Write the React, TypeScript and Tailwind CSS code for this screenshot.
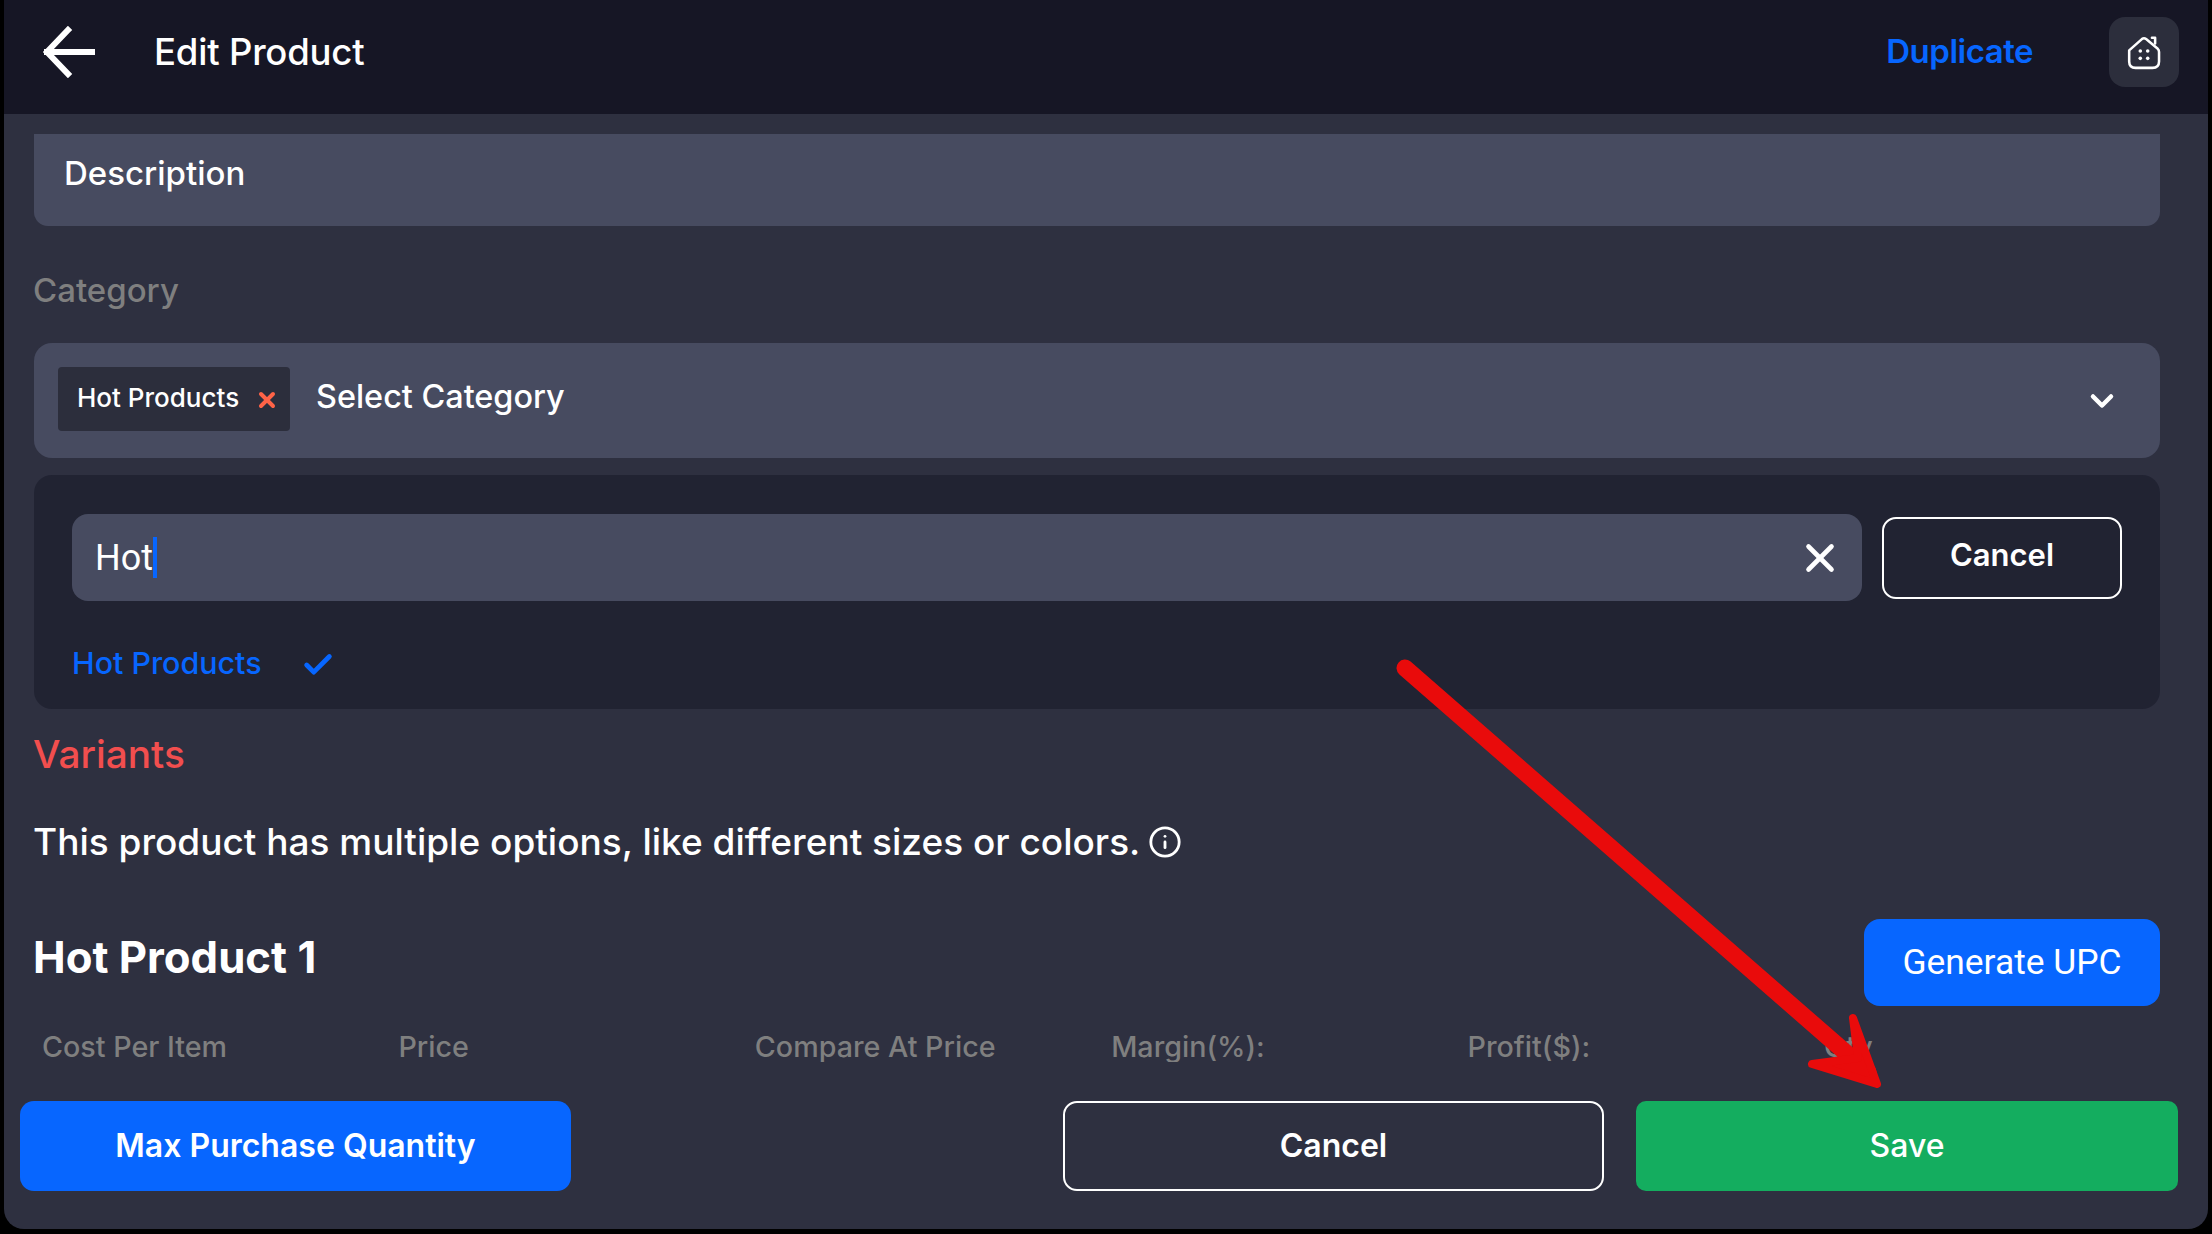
import React from 'react';
import { ChevronDown, X, Check, Info } from 'lucide-react';

const columns = ['Cost Per Item', 'Price', 'Compare At Price', 'Margin(%):', 'Profit($):', 'Qty'];

function HomeIcon() {
    return (
        <svg width="36" height="36" viewBox="0 0 34 34" fill="none" stroke="white" strokeWidth="2.4" strokeLinecap="round" strokeLinejoin="round">
            <path d="M3 15.5 L15 4.8 Q17 3.2 19 4.8 L30 14 Q31.2 15.2 31.2 17 V26 Q31.2 32 25 32 H9 Q3 32 3 26 Z" />
            <path d="M24.5 3.5 L27.5 3.5 L27.5 9" />
            <circle cx="13.5" cy="16" r="1.7" fill="white" stroke="none" />
            <circle cx="20.5" cy="16" r="1.7" fill="white" stroke="none" />
            <circle cx="13.5" cy="23" r="1.7" fill="white" stroke="none" />
            <circle cx="20.5" cy="23" r="1.7" fill="white" stroke="none" />
        </svg>
    );
}

export default function App() {
    return (
        <div className="relative h-[1234px] w-[2212px] overflow-hidden bg-black font-['Inter',sans-serif] text-white">
            <div className="ml-[4px] flex h-[1229px] w-[2204px] flex-col rounded-b-[20px] bg-[#2e3040]">
                {/* Top bar */}
                <div className="flex h-[114px] shrink-0 items-center bg-[#161625] pb-[10px] pl-[38px] pr-[29px]">
                    <svg width="54" height="52" viewBox="0 0 54 52" fill="none" stroke="white" strokeWidth="6" strokeLinecap="square">
                        <path d="M5 26 H50" />
                        <path d="M26 4 L5 26 L26 48" />
                    </svg>
                    <span className="ml-[58px] text-[36.5px] font-medium tracking-[-0.2px]">Edit Product</span>
                    <span className="ml-auto text-[33px] font-semibold tracking-[-0.5px] text-[#0766ff]">Duplicate</span>
                    <button className="ml-[76px] flex h-[70px] w-[70px] items-center justify-center rounded-[16px] bg-[#2c2e3c]">
                        <HomeIcon />
                    </button>
                </div>

                {/* Scrolled form, cut off at both ends */}
                <div className="mt-[20px] h-[928px] shrink-0 overflow-hidden pl-[30px] pr-[48px]">
                    <div className="h-[92px] rounded-b-[14px] bg-[#474b60] pl-[30px] pt-[19px] text-[33px] font-medium leading-[40px]">
                        Description
                    </div>
                    <div className="mt-[44px] -ml-px text-[33px] font-medium leading-[40px] text-[#7f7f7f]">Category</div>

                    <div className="mt-[33px] flex h-[115px] items-center rounded-[18px] bg-[#474b60] pl-[24px] pr-[40px]">
                        <div className="mb-[3px] flex h-[64px] w-[232px] items-center rounded-[4px] bg-[#2c2e3c] pl-[19px]">
                            <span className="mb-[2px] text-[26px] font-medium leading-none">Hot Products</span>
                            <X className="ml-[16px] mt-[2px] h-[24px] w-[24px] text-[#ff6347]" strokeWidth={4} />
                        </div>
                        <span className="mb-[6px] ml-[26px] text-[32.4px] font-medium">Select Category</span>
                        <ChevronDown className="ml-auto h-[36px] w-[36px]" strokeWidth={3} />
                    </div>

                    <div className="mt-[17px] h-[234px] rounded-[18px] bg-[#212332] pl-[38px] pr-[38px] pt-[39px]">
                        <div className="flex items-center gap-[20px]">
                            <div className="flex h-[87px] flex-1 items-center rounded-[16px] bg-[#474b60] pl-[23px] pr-[19px] font-['Roboto',sans-serif] text-[36px]">
                                <span>Hot</span>
                                <span className="h-[41px] w-[4px] bg-[#0766ff]" />
                                <X className="ml-auto h-[46px] w-[46px]" strokeWidth={2.4} />
                            </div>
                            <button className="h-[82px] w-[240px] rounded-[14px] border-2 border-white pb-[4px] text-[31px] font-semibold">Cancel</button>
                        </div>
                        <div className="mt-[42px] flex items-center text-[#0766ff]">
                            <span className="text-[30.4px] font-medium leading-[40px]">Hot Products</span>
                            <Check className="ml-[39px] mt-[4px] h-[34px] w-[34px]" strokeWidth={3.4} />
                        </div>
                    </div>

                    <div className="mt-[23px] -ml-px text-[38.8px] font-medium leading-[44px] text-[#f24e4e]">Variants</div>

                    <div className="mt-[44px] -ml-px flex items-center text-[37px] font-medium leading-[44px]">
                        <span>This product has multiple options, like different sizes or colors.</span>
                        <Info className="ml-[8px] h-[34px] w-[34px]" strokeWidth={2} />
                    </div>

                    <div className="mt-[55px] flex items-start justify-between">
                        <span className="mt-[14px] -ml-px text-[43.7px] font-bold leading-[50px]">Hot Product 1</span>
                        <button className="h-[87px] w-[296px] rounded-[16px] bg-[#0766ff] font-['Roboto',sans-serif] text-[35.4px]">Generate UPC</button>
                    </div>

                    <div className="mt-[21px] grid grid-cols-[repeat(6,356.4px)] pl-[8px] text-[28.7px] font-medium leading-[40px] text-[#7f7f7f]">
                        {columns.map((label) => (
                            <span key={label}>{label}</span>
                        ))}
                    </div>
                </div>

                {/* Footer actions */}
                <div className="mt-[39px] flex pl-[16px] pr-[30px]">
                    <button className="h-[90px] w-[551px] rounded-[14px] bg-[#0766ff] text-[32px] font-semibold">Max Purchase Quantity</button>
                    <button className="ml-[492px] h-[90px] w-[541px] rounded-[14px] border-2 border-white text-[32px] font-semibold">Cancel</button>
                    <button className="ml-[32px] h-[90px] w-[542px] rounded-[10px] bg-[#14ad5f] text-[32px] font-medium">Save</button>
                </div>
            </div>

            {/* Red annotation arrow drawn over the screenshot */}
            <svg className="absolute left-0 top-0" width="2212" height="1234" fill="none" stroke="#e90b0b" strokeLinecap="round" strokeLinejoin="round">
                <path d="M1405 668 L1868 1072" strokeWidth="17" />
                <path d="M1853 1018 L1877 1084 L1812 1064 L1858 1058 Z" strokeWidth="8" fill="#e90b0b" />
            </svg>
        </div>
    );
}
